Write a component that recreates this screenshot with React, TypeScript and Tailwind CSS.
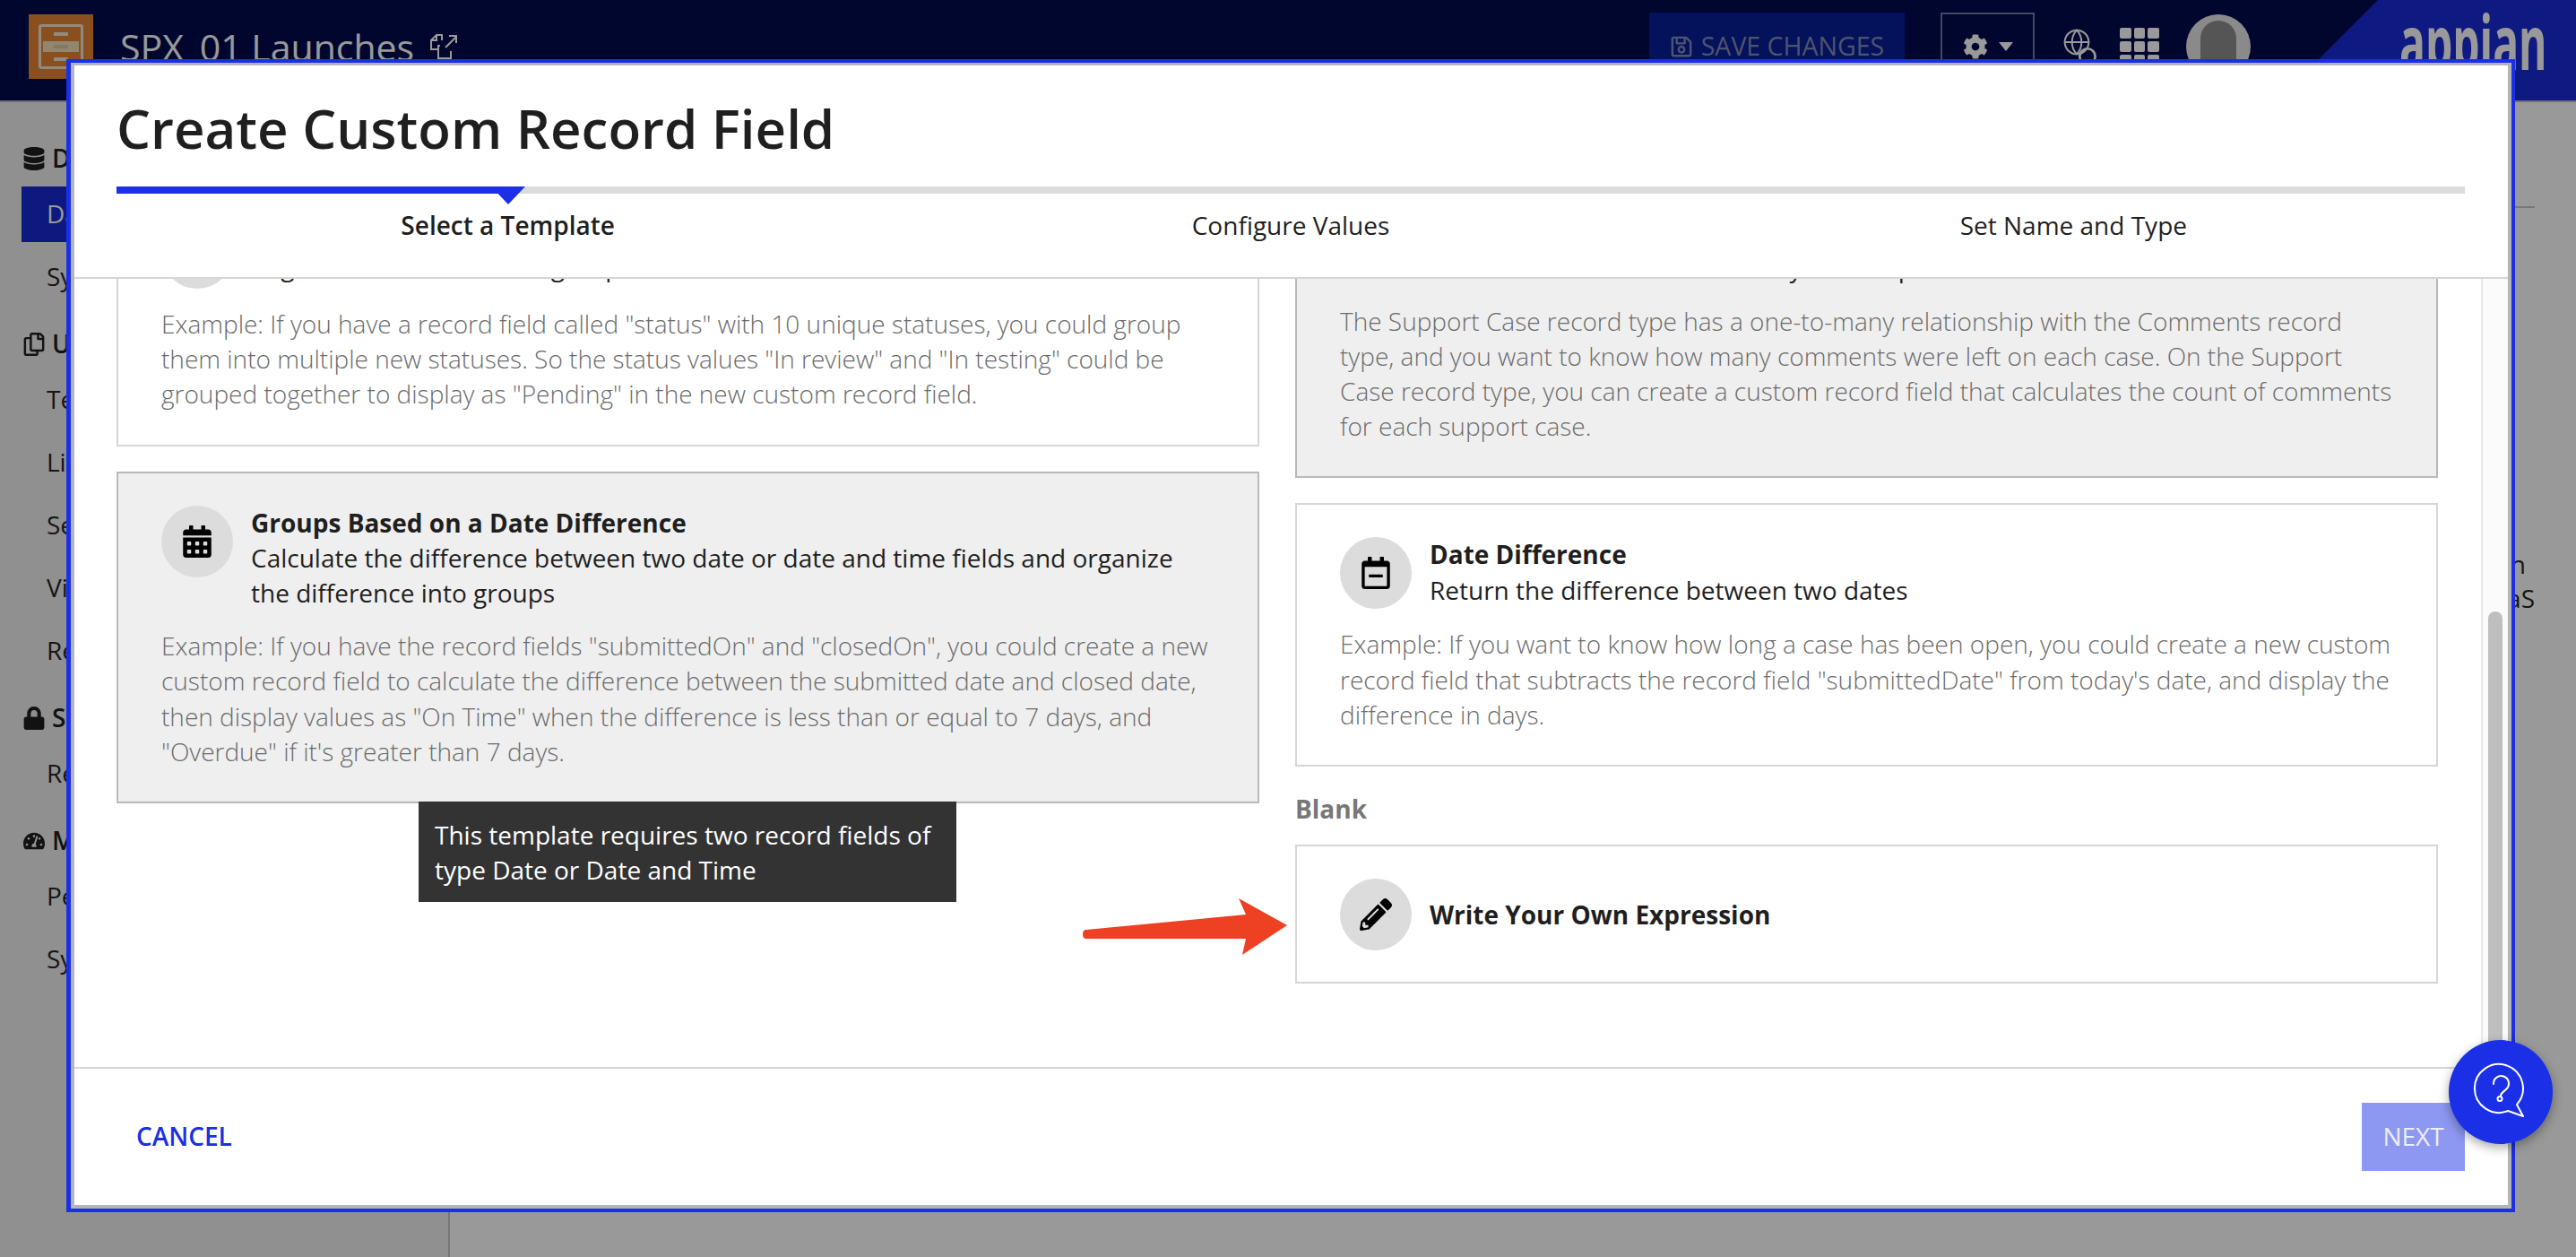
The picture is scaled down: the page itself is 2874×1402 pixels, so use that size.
import type { ReactNode } from 'react'
import { Globe, Search } from 'lucide-react'
import {
  FaCalendarAlt,
  FaCog,
  FaDatabase,
  FaLock,
  FaPencilAlt,
  FaRegCalendarMinus,
  FaRegCopy,
  FaRegSave,
  FaTachometerAlt,
} from 'react-icons/fa'

interface CardProps {
  icon: ReactNode
  title: string
  description?: ReactNode
  example?: ReactNode
  selected?: boolean
  pulled?: boolean
  children?: ReactNode
}

function TemplateCard({ icon, title, description, example, selected, pulled, children }: CardProps) {
  let cardClass = 'relative border-2 border-[#d6d6d6] bg-white px-[48px] pt-[36px] pb-[36px]'
  if (selected) cardClass = 'relative border-2 border-[#b9b9b9] bg-[#efefef] px-[48px] pt-[36px] pb-[36px]'
  if (!example) cardClass = 'relative border-2 border-[#d6d6d6] bg-white px-[48px] pt-[36px] pb-[35px]'

  return (
    <div className={cardClass}>
      <div className="flex gap-[20px]">
        <div className="flex h-[80px] w-[80px] shrink-0 items-center justify-center rounded-full bg-[#dcdcdc] text-[36px] text-black">
          {icon}
        </div>
        <div
          className={
            example
              ? pulled
                ? '-mt-[3px] min-w-0 text-[#1f1f1f]'
                : 'min-w-0 text-[#1f1f1f]'
              : 'flex min-w-0 items-center text-[#1f1f1f]'
          }
        >
          <div className="font-bold">{title}</div>
          {description && <div>{description}</div>}
        </div>
      </div>
      {example && <p className="mt-[20px] font-light text-[#6b6b6b]">{example}</p>}
      {children}
    </div>
  )
}

function SideHeading({ icon, label }: { icon: ReactNode; label: string }) {
  return (
    <div className="mt-[13px] flex h-[54px] items-center gap-[8px] pl-[26px] font-semibold text-[#1f1f1f] first:mt-0">
      <span className="flex w-[24px] justify-center text-[26px]">{icon}</span>
      {label}
    </div>
  )
}

function SideItem({ label, active }: { label: string; active?: boolean }) {
  return (
    <div className="flex h-[70px] items-center pl-[24px]">
      <div
        className={
          active
            ? 'flex h-[62px] w-full items-center bg-[#162bd4] pl-[28px] text-white'
            : 'flex h-[62px] w-full items-center pl-[28px] text-[#262626]'
        }
      >
        {label}
      </div>
    </div>
  )
}

function TopBar() {
  return (
    <div className="flex h-[114px] items-center border-b-2 border-[#b9b9b9] bg-[#000a4d] pb-[8px] pl-[32px]">
      <div className="flex h-[72px] w-[72px] items-center justify-center bg-[#e68433]">
        <div className="flex h-[50px] w-[50px] flex-col gap-[2px] rounded-[3px] border-[3px] border-[#f0e6d8] p-[2px]">
          <div className="flex flex-1 items-center justify-center bg-[#e68433]"><span className="h-[4px] w-[16px] bg-[#f0e6d8]" /></div>
          <div className="flex flex-1 items-center justify-center bg-[#f5e0b8]"><span className="h-[4px] w-[16px] bg-[#d8c8a8]" /></div>
          <div className="flex flex-1 items-center justify-center bg-[#e68433]"><span className="h-[4px] w-[16px] bg-[#f0e6d8]" /></div>
        </div>
      </div>
      <div className="ml-[30px] text-[41px] leading-[56px] text-white">SPX_01 Launches</div>
      <svg className="ml-[17px]" width="32" height="30" viewBox="0 0 32 30" fill="none" stroke="white" strokeWidth="2">
        <path d="M9 18H2V8l6-6h6v6M8 2v6H2" />
        <path d="M12 14h-2v6l0 8h14v-8" />
        <path d="M18 16 30 4M22 3h8v8" />
      </svg>
      <div className="flex-1" />
      <div className="flex h-[76px] w-[285px] items-center justify-center gap-[9px] bg-[#051e96] text-[28.5px] text-[#848abb]">
        <FaRegSave className="text-[26px]" />
        SAVE CHANGES
      </div>
      <div className="ml-[40px] flex h-[76px] w-[105px] items-center justify-center gap-[12px] border-2 border-[#7379a8] text-white">
        <FaCog className="text-[28px]" />
        <span className="h-0 w-0 border-x-[8px] border-t-[10px] border-x-transparent border-t-white" />
      </div>
      <div className="relative ml-[31px] h-[42px] w-[40px] text-white">
        <Globe size={32} strokeWidth={1.5} />
        <Search size={26} strokeWidth={2.5} className="absolute right-[-2px] bottom-[-4px]" />
      </div>
      <div className="ml-[24px] grid w-[44px] grid-cols-3 gap-[3px]">
        {Array.from({ length: 9 }, (_, i) => (
          <span key={i} className="h-[12px] rounded-[2px] bg-white" />
        ))}
      </div>
      <div className="ml-[30px] flex h-[72px] w-[72px] justify-center overflow-hidden rounded-full bg-[#e6e6e6] pt-[7px]">
        <div className="h-[60px] w-[40px] rounded-t-full bg-[#8e8e8e]" />
      </div>
      <div className="ml-[30px] -mb-[8px] h-[112px] w-[333px] overflow-hidden bg-[#192bd9] pt-[8px] pl-[136px] [clip-path:polygon(112px_0,100%_0,100%_100%,0_100%)]">
        <span className="block origin-left scale-x-[0.57] text-[84px] leading-[76px] font-bold text-white">appian</span>
      </div>
    </div>
  )
}

function PageBehind() {
  return (
    <div className="flex h-[1288px]">
      <div className="w-[502px] shrink-0 border-r-2 border-[#c6c6c6] bg-[#f0f0f0] pt-[36px]">
        <SideHeading icon={<FaDatabase />} label="Data" />
        <SideItem label="Data Model" active />
        <SideItem label="Sync Options" />
        <SideHeading icon={<FaRegCopy />} label="User Experience" />
        <SideItem label="Tempo" />
        <SideItem label="List" />
        <SideItem label="Search" />
        <SideItem label="Views" />
        <SideItem label="Related Actions" />
        <SideHeading icon={<FaLock />} label="Security" />
        <SideItem label="Record Security" />
        <SideHeading icon={<FaTachometerAlt />} label="Monitoring" />
        <SideItem label="Performance" />
        <SideItem label="Sync History" />
      </div>
      <div className="flex-1 bg-white pr-[46px] text-[#262626]">
        <div className="h-[118px] border-b-2 border-[#c6c6c6]" />
        <div className="mt-[378px] text-right leading-[38px]">
          <div className="pr-[10px]">Description</div>
          <div>SaaS</div>
        </div>
      </div>
    </div>
  )
}

function Stepper() {
  return (
    <div className="mt-[25px]">
      <div className="relative h-[8px] bg-[#dcdcdc]">
        <div className="h-[8px] w-[437px] bg-[#1a2fe6]" />
        <div className="absolute top-0 left-[418px] h-0 w-0 border-x-[19px] border-t-[20px] border-x-transparent border-t-[#1a2fe6]" />
      </div>
      <div className="mt-[16px] grid grid-cols-3 text-center text-[#1f1f1f]">
        <div className="font-semibold">Select a Template</div>
        <div>Configure Values</div>
        <div>Set Name and Type</div>
      </div>
    </div>
  )
}

function TemplateColumns() {
  return (
    <div className="grid min-w-0 flex-1 grid-cols-[1275px_1275px] gap-[40px] overflow-hidden pl-[47px]">
      <div className="-mt-[107px] flex flex-col gap-[28px]">
        <TemplateCard
          pulled
          icon={<FaCalendarAlt />}
          title="Groups Based on Record Field Values"
          description="Organize values into new groups"
          example={'Example: If you have a record field called "status" with 10 unique statuses, you could group them into multiple new statuses. So the status values "In review" and "In testing" could be grouped together to display as "Pending" in the new custom record field.'}
        />
        <TemplateCard
          selected
          icon={<FaCalendarAlt />}
          title="Groups Based on a Date Difference"
          description="Calculate the difference between two date or date and time fields and organize the difference into groups"
          example={'Example: If you have the record fields "submittedOn" and "closedOn", you could create a new custom record field to calculate the difference between the submitted date and closed date, then display values as "On Time" when the difference is less than or equal to 7 days, and "Overdue" if it\'s greater than 7 days.'}
        >
          <div className="absolute top-full left-[335px] z-10 w-[600px] bg-[#333333] px-[18px] pt-[18px] pb-[16px] text-white">
            This template requires two record fields of type Date or Date and Time
          </div>
        </TemplateCard>
      </div>
      <div className="-mt-[148px] flex flex-col">
        <TemplateCard
          selected
          icon={<FaCalendarAlt />}
          title="Aggregations"
          description={
            <>
              Calculate the count, sum, or average of a field from a related record type,
              <br />
              then return the total amount by related parent
            </>
          }
          example="The Support Case record type has a one-to-many relationship with the Comments record type, and you want to know how many comments were left on each case. On the Support Case record type, you can create a custom record field that calculates the count of comments for each support case."
        />
        <div className="mt-[28px]">
          <TemplateCard
            icon={<FaRegCalendarMinus />}
            title="Date Difference"
            description="Return the difference between two dates"
            example={'Example: If you want to know how long a case has been open, you could create a new custom record field that subtracts the record field "submittedDate" from today\'s date, and display the difference in days.'}
          />
        </div>
        <div className="mt-[28px] mb-[20px] font-bold text-[#777777]">Blank</div>
        <TemplateCard icon={<FaPencilAlt />} title="Write Your Own Expression" />
      </div>
    </div>
  )
}

function ScrollTrack() {
  return (
    <div className="w-[30px] shrink-0 overflow-hidden border-l-2 border-[#e8e8e8] bg-[#fbfbfb] pt-[371px] pl-[6px]">
      <div className="h-[508px] w-[16px] rounded-t-full bg-[#bfbfbf]" />
    </div>
  )
}

function RedArrow() {
  return (
    <svg className="absolute top-[1002px] left-[1200px] z-20" width="240" height="66" viewBox="1200 1002 240 66">
      <path d="M1212 1037 L1390 1020 L1382 1002 L1436 1032 L1386 1065 L1390 1047 L1212 1047 Q1208 1047 1208 1042 Q1208 1037 1212 1037 Z" fill="#ee4023" />
    </svg>
  )
}

function HelpBubble() {
  return (
    <div className="absolute right-[26px] bottom-[126px] z-30 h-[116px] w-[116px] rounded-full bg-[#1a2fe6] shadow-[0_4px_12px_rgba(0,0,0,0.35)]">
      <svg width="116" height="116" viewBox="0 0 116 116" fill="none" stroke="white" strokeWidth="2">
        <path d="M66 79 A27 27 0 1 1 76 72 L83 85 Z" strokeLinejoin="round" />
        <path d="M50 49 a8.5 8.5 0 1 1 14 6 c-3 3 -6 4 -6 7" strokeLinecap="round" />
        <circle cx="57" cy="65.5" r="2.5" />
      </svg>
    </div>
  )
}

export default function App() {
  return (
    <div className="relative h-[1402px] w-[2874px] overflow-hidden bg-white font-['Open_Sans',sans-serif] text-[28px] leading-[39.2px]">
      <TopBar />
      <PageBehind />
      <div className="absolute inset-0 bg-black/40" />

      <div className="absolute top-[66px] left-[74px] flex h-[1286px] w-[2732px] border-y-[4px] border-r-[4px] border-l-[5px] border-[#1a2fe6] bg-[#b5b5b5] pt-[3px] pr-[4px] pb-[4px] pl-[4px]">
        <div className="flex min-w-0 flex-1 flex-col bg-white">
          <div className="h-[238px] shrink-0 border-b-2 border-[#d6d6d6] px-[47px] pt-[30px]">
            <div className="text-[60px] leading-[80px] font-semibold text-[#1f1f1f]">Create Custom Record Field</div>
            <div className="w-[2620px]">
              <Stepper />
            </div>
          </div>
          <div className="flex min-h-0 flex-1 overflow-hidden">
            <TemplateColumns />
            <ScrollTrack />
          </div>
          <div className="flex h-[154px] shrink-0 items-center justify-between border-t-2 border-[#d6d6d6] pr-[48px] pl-[69px]">
            <span className="font-semibold text-[#1a2fe6]">CANCEL</span>
            <div className="flex h-[76px] w-[115px] items-center justify-center bg-[#8c98f2] text-[#eeeeee]">NEXT</div>
          </div>
        </div>
      </div>

      <RedArrow />
      <HelpBubble />
    </div>
  )
}
